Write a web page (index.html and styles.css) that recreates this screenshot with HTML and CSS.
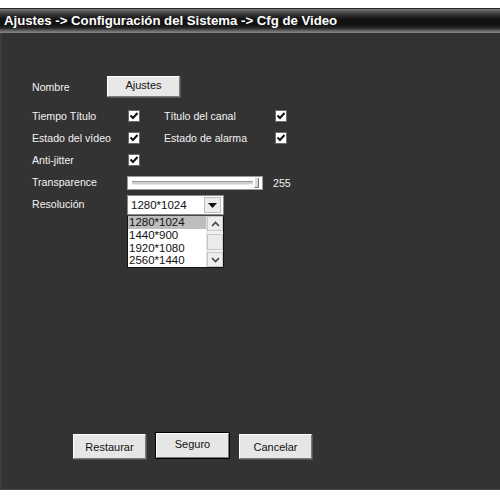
FILE: index.html
```html
<!DOCTYPE html>
<html>
<head>
<meta charset="utf-8">
<link rel="stylesheet" href="styles.css">
</head>
<body>
<div class="frame">
  <div class="header">Ajustes -&gt; Configuración del Sistema -&gt; Cfg de Video</div>
  <div class="panel">
    <div class="form">
      <div class="row row-name">
        <span class="lbl lbl-name">Nombre</span>
        <button class="btn btn-name">Ajustes</button>
      </div>
      <div class="row">
        <span class="lbl lbl-a">Tiempo Título</span>
        <span class="cbwrap"><svg class="cb" width="12" height="12" viewBox="0 0 12 12"><rect x="0.5" y="0.5" width="11" height="11" fill="#fff" stroke="#6a6a6a"/><path d="M2.5 5.5 L5 8 L9.5 3" fill="none" stroke="#111" stroke-width="2"/></svg></span>
        <span class="lbl lbl-b">Título del canal</span>
        <span class="cbwrap"><svg class="cb" width="12" height="12" viewBox="0 0 12 12"><rect x="0.5" y="0.5" width="11" height="11" fill="#fff" stroke="#6a6a6a"/><path d="M2.5 5.5 L5 8 L9.5 3" fill="none" stroke="#111" stroke-width="2"/></svg></span>
      </div>
      <div class="row">
        <span class="lbl lbl-a">Estado del vídeo</span>
        <span class="cbwrap"><svg class="cb" width="12" height="12" viewBox="0 0 12 12"><rect x="0.5" y="0.5" width="11" height="11" fill="#fff" stroke="#6a6a6a"/><path d="M2.5 5.5 L5 8 L9.5 3" fill="none" stroke="#111" stroke-width="2"/></svg></span>
        <span class="lbl lbl-b">Estado de alarma</span>
        <span class="cbwrap"><svg class="cb" width="12" height="12" viewBox="0 0 12 12"><rect x="0.5" y="0.5" width="11" height="11" fill="#fff" stroke="#6a6a6a"/><path d="M2.5 5.5 L5 8 L9.5 3" fill="none" stroke="#111" stroke-width="2"/></svg></span>
      </div>
      <div class="row">
        <span class="lbl lbl-a">Anti-jitter</span>
        <span class="cbwrap"><svg class="cb" width="12" height="12" viewBox="0 0 12 12"><rect x="0.5" y="0.5" width="11" height="11" fill="#fff" stroke="#6a6a6a"/><path d="M2.5 5.5 L5 8 L9.5 3" fill="none" stroke="#111" stroke-width="2"/></svg></span>
      </div>
      <div class="row row-slider">
        <span class="lbl lbl-s">Transparence</span>
        <div class="slider"><div class="groove"></div><div class="thumb"></div></div>
        <span class="val">255</span>
      </div>
      <div class="row row-res">
        <span class="lbl lbl-s">Resolución</span>
        <div class="selcol">
          <div class="select">
            <span class="seltext">1280*1024</span>
            <span class="selbtn"><svg width="9" height="5" viewBox="0 0 9 5"><path d="M0 0 H9 L4.5 5 Z" fill="#111"/></svg></span>
          </div>
          <div class="list">
            <div class="opts">
              <div class="opt sel">1280*1024</div>
              <div class="opt">1440*900</div>
              <div class="opt">1920*1080</div>
              <div class="opt">2560*1440</div>
            </div>
            <div class="sb">
              <div class="sbbtn"><svg width="9" height="6" viewBox="0 0 9 6"><path d="M1 5 L4.5 1.5 L8 5" fill="none" stroke="#444" stroke-width="1.6"/></svg></div>
              <div class="sbtrack"><div class="sbthumb"></div></div>
              <div class="sbbtn"><svg width="9" height="6" viewBox="0 0 9 6"><path d="M1 1 L4.5 4.5 L8 1" fill="none" stroke="#444" stroke-width="1.6"/></svg></div>
            </div>
          </div>
        </div>
      </div>
    </div>
    <div class="actions">
      <button class="btn">Restaurar</button>
      <button class="btn btn-default">Seguro</button>
      <button class="btn">Cancelar</button>
    </div>
  </div>
</div>
</body>
</html>
```
FILE: styles.css
```css
html, body {
  margin: 0;
  padding: 0;
  background: #ffffff;
}
body {
  font-family: "Liberation Sans", Arial, sans-serif;
  font-size: 10.6px;
  width: 500px;
  height: 500px;
  overflow: hidden;
}
.frame {
  padding-top: 8px;
}
.header {
  height: 25px;
  box-sizing: border-box;
  border-top: 1px solid #2a2a2a;
  background: linear-gradient(#7a7a7a 0px, #5c5c5c 2px, #3a3a3a 5px, #141414 10px, #101010 15px, #262626 19px, #6a6a6a 22px, #888 24px);
  color: #ffffff;
  font-weight: bold;
  font-size: 13.2px;
  line-height: 23px;
  padding-left: 4px;
  white-space: nowrap;
}
.panel {
  height: 457px;
  box-sizing: border-box;
  background: #333333;
  border-left: 2px solid #3d3d3d;
  border-bottom: 1px solid #4a4a4a;
  display: flex;
  flex-direction: column;
  padding-bottom: 30px;
}
.form {
  margin-top: 43px;
  margin-left: 30px;
  display: flex;
  flex-direction: column;
  color: #f2f2f2;
}
.row {
  display: flex;
  align-items: center;
  height: 22px;
}
.row-name {
  height: 21px;
  margin-bottom: 8px;
}
.lbl-name { width: 75px; }
.lbl-a { width: 96px; }
.lbl-b { width: 111px; }
.lbl-s { width: 95px; }
.cbwrap {
  width: 36px;
  display: flex;
}
.cb { display: block; }
.row-slider { height: 23px; }
.slider {
  width: 136px;
  height: 14px;
  background: #ffffff;
  border: 1px solid #9a9a9a;
  box-sizing: border-box;
  display: flex;
  align-items: center;
  padding: 0 3px 0 4px;
  gap: 1px;
}
.groove {
  flex: 1;
  height: 2px;
  border-top: 1px solid #9a9a9a;
  border-bottom: 1px solid #e8e8e8;
  background: #cfcfcf;
}
.thumb {
  width: 3px;
  height: 9px;
  background: #d8d8d8;
  border-right: 1px solid #777;
  border-bottom: 1px solid #777;
  border-left: 1px solid #fff;
}
.val {
  margin-left: 10px;
  color: #f2f2f2;
}
.row-res {
  align-items: flex-start;
  height: auto;
  padding-top: 1px;
}
.lbl-s.lbl { line-height: 19px; }
.selcol {
  display: flex;
  flex-direction: column;
  width: 97px;
}
.select {
  height: 20px;
  box-sizing: border-box;
  background: #fff;
  border: 1px solid #8a8a8a;
  display: flex;
  align-items: center;
  color: #111;
}
.seltext {
  flex: 1;
  padding-left: 3px;
  font-size: 11.5px;
}
.selbtn {
  width: 15px;
  height: 14px;
  margin-right: 2px;
  background: #ececec;
  border: 1px solid #bdbdbd;
  display: flex;
  align-items: center;
  justify-content: center;
}
.list {
  height: 53px;
  box-sizing: border-box;
  background: #fff;
  border: 1px solid #111;
  border-top: 1px solid #444;
  display: flex;
  color: #111;
}
.opts {
  flex: 1;
  display: flex;
  flex-direction: column;
}
.opt {
  height: 12.75px;
  line-height: 12.75px;
  padding-left: 1px;
  font-size: 11.5px;
  white-space: nowrap;
}
.opt.sel {
  background: #bdbdbd;
}
.sb {
  width: 16px;
  display: flex;
  flex-direction: column;
  background: #f2f2f2;
  border-left: 1px solid #e0e0e0;
}
.sbbtn {
  height: 15px;
  box-sizing: border-box;
  background: #ededed;
  border: 1px solid #c8c8c8;
  display: flex;
  align-items: center;
  justify-content: center;
}
.sbtrack {
  flex: 1;
  display: flex;
  align-items: center;
}
.sbthumb {
  width: 100%;
  height: 16px;
  box-sizing: border-box;
  background: #ebebeb;
  border: 1px solid #c8c8c8;
}
.btn {
  font-family: "Liberation Sans", Arial, sans-serif;
  font-size: 11px;
  color: #111;
  background: #e6e6e6;
  border: 1px solid;
  border-color: #ffffff #7a7a7a #7a7a7a #ffffff;
  box-shadow: 1px 1px 0 #555;
  padding: 0;
  margin: 0;
  width: 73px;
  height: 25px;
}
.btn-name {
  width: 73px;
  height: 21px;
  background: #e8e8e8;
  padding-bottom: 3px;
}
.actions {
  margin-top: auto;
  display: flex;
  align-items: flex-end;
  gap: 10px;
  margin-left: 71px;
}
.btn-default {
  outline: 1px solid #000;
  height: 25px;
  margin-bottom: 1px;
  padding-bottom: 4px;
}
```
